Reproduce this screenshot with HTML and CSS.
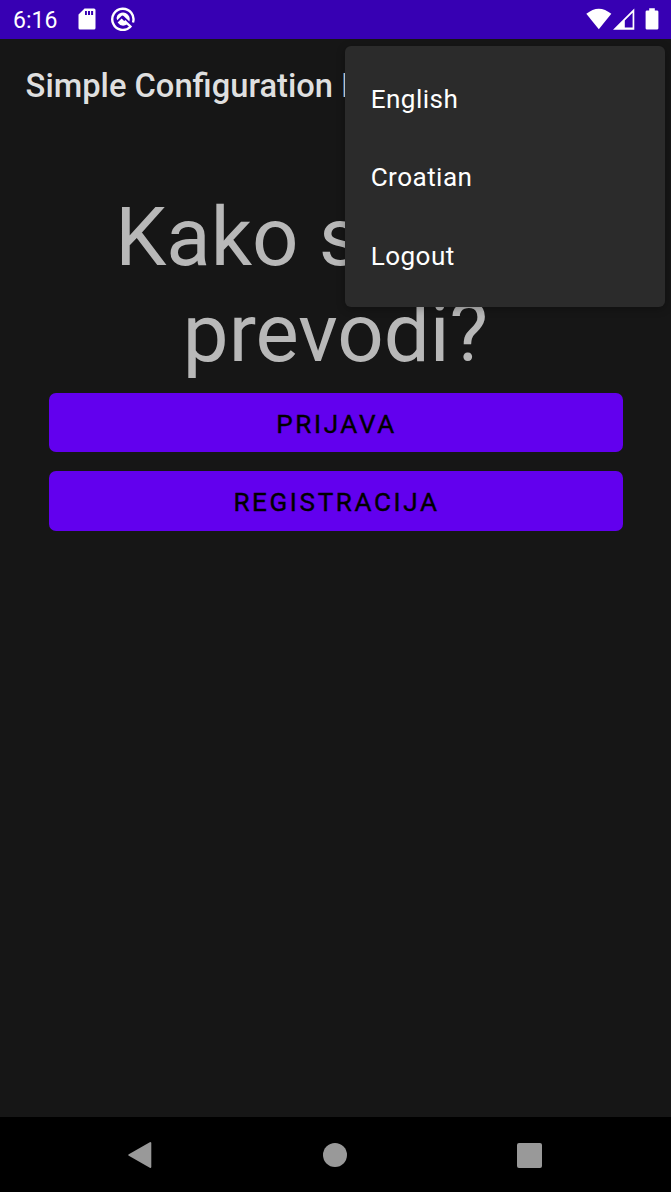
FILE: index.html
```html
<!DOCTYPE html>
<html lang="hr">
<head>
<meta charset="utf-8">
<title>Simple Configuration</title>
<link rel="stylesheet" href="styles.css">
</head>
<body>
<div class="screen">
  <header class="status">
    <span class="clock">6:16</span>
    <svg class="sd" width="18" height="22" viewBox="0 0 18 22"><path fill="#fff" fill-rule="evenodd" d="M6.5.5H16Q17.5.5 17.5 2V20Q17.5 21.5 16 21.5H2Q.5 21.5 .5 20V6.5ZM7 3V7H8.9V3ZM10 3V7H12V3ZM13.1 3V7H15.1V3Z"/></svg>
    <svg class="round" width="24" height="24" viewBox="0 0 24 24"><path fill="none" stroke="#fff" stroke-width="2.4" d="M19.2 20A10.6 10.6 0 1 1 22 15.5"/><path fill="#fff" d="M6.3 8.6A6.8 6.8 0 0 1 18.4 14.6L12.6 9Q11.3 8 10.2 9.2L6.2 13.2Q5 11 6.3 8.6Z"/><path fill="#fff" d="M6.6 15.4L10.6 11.5L16.4 17.3Q10.5 20.8 6.6 15.4Z"/><path fill="none" stroke="#fff" stroke-width="2.3" d="M13.5 13.7L20.3 20.4"/></svg>
    <svg class="wifi" width="26" height="22" viewBox="0 0 26 22"><path fill="#fff" d="M.3 5.8Q12.8-4.5 25.3 5.8L12.8 21.2Z"/></svg>
    <svg class="signal" width="22" height="22" viewBox="0 0 22 22"><path fill="#fff" fill-rule="evenodd" d="M21.3.4V21.7H0ZM19.6 4.8L11.8 12.6V19.6H19.6Z"/></svg>
    <svg class="battery" width="14" height="22" viewBox="0 0 14 22"><path fill="#fff" d="M4.2.3H9.8V2.4H12Q13.4 2.4 13.4 3.8V20.2Q13.4 21.6 12 21.6H2Q.6 21.6 .6 20.2V3.8Q.6 2.4 2 2.4H4.2Z"/></svg>
  </header>
  <div class="appbar">Simple Configuration I</div>
  <main class="content">
    <h1 class="question">Kako se ovo<br>prevodi?</h1>
    <button class="action">PRIJAVA</button>
    <button class="action">REGISTRACIJA</button>
  </main>
  <nav class="navbar">
    <svg class="back" width="24" height="28" viewBox="0 0 24 28"><path fill="#999" stroke="#999" stroke-width="2" stroke-linejoin="round" d="M1.3 14L22.3 2V26Z"/></svg>
    <span class="home"></span>
    <span class="recent"></span>
  </nav>
  <div class="menu">
    <div class="item">English</div>
    <div class="item">Croatian</div>
    <div class="item">Logout</div>
  </div>
</div>
</body>
</html>
```
FILE: styles.css
```css
* { box-sizing: border-box; }
body { margin: 0; background: #161616; font-family: Roboto, sans-serif; }
.screen { position: relative; display: flex; flex-direction: column; width: 671px; height: 1192px; overflow: hidden; background: #161616; }
.status { display: flex; align-items: flex-start; height: 39px; padding: 8px 12px 0 13px; background: #3700b3; color: #fff; }
.status svg { flex: none; }
.clock { width: 65px; padding-top: 1px; font-size: 23px; line-height: 24px; }
.round { margin: -1px 0 0 15px; }
.wifi { margin-left: auto; }
.signal { margin-left: 1px; }
.battery { margin-left: 10px; }
.appbar { height: 92px; padding-left: 25.6px; color: #dfdfdf; font-size: 32.7px; font-weight: 500; line-height: 95px; white-space: nowrap; }
.content { display: flex; flex: 1; flex-direction: column; padding: 59px 48.5px 0; }
.question { margin: 0 0 11.5px; color: #b8b8b8; font-size: 81.6px; font-weight: 400; line-height: 95.6px; text-align: center; white-space: nowrap; }
.action { height: 59.5px; margin: 0 0 19px; padding: 3px 0 0 2px; border: 0; border-radius: 7px; background: #6200ee; color: #000; font-family: inherit; font-size: 26.1px; font-weight: 400; letter-spacing: 2.6px; -webkit-text-stroke: .4px #000; }
.navbar { display: flex; align-items: center; flex: none; height: 75.5px; padding: 2px 129px 0 128px; background: #000; justify-content: space-between; }
.home { width: 24px; height: 24px; border-radius: 50%; background: #999; }
.recent { width: 25px; height: 25px; border-radius: 2px; background: #999; }
.menu { position: absolute; top: 45.5px; left: 344.7px; width: 320.5px; height: 261.5px; padding: 13px 26px 0; border-radius: 6px; background: #2b2b2b; color: #fff; box-shadow: 0 2px 8px rgba(0, 0, 0, .28); }
.item { height: 78.6px; font-size: 26.1px; line-height: 80.4px; letter-spacing: .45px; }
```
